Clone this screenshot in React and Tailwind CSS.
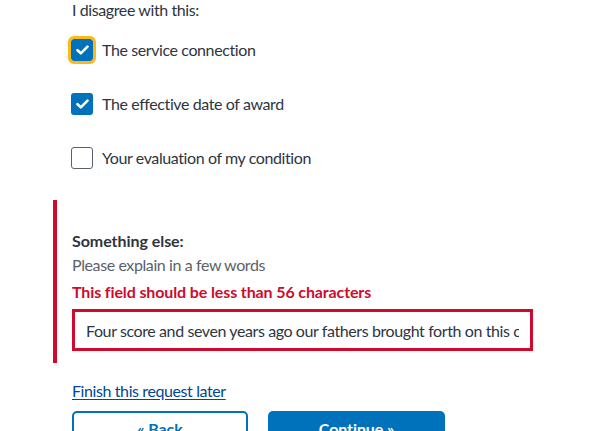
import { useState } from "react";

const options = [
  { id: "service", label: "The service connection", focused: true },
  { id: "date", label: "The effective date of award" },
  { id: "evaluation", label: "Your evaluation of my condition" },
];

function Checkbox({ checked, focused, onToggle }) {
  return (
    <button
      type="button"
      onClick={onToggle}
      className={
        "flex h-[22px] w-[22px] shrink-0 items-center justify-center rounded-[3px] " +
        (checked ? "bg-[#0071bb]" : "border-[1.5px] border-[#5b616b] bg-white") +
        (focused ? " outline-[3px] outline-offset-[0px] outline-solid outline-[#fdb81e]" : "")
      }
    >
      {checked && (
        <svg width="13" height="10" viewBox="0 0 13 10" fill="none">
          <path d="M1.5 5.2 4.8 8.3 11.5 1.6" stroke="white" strokeWidth="2.6" strokeLinecap="round" strokeLinejoin="round" />
        </svg>
      )}
    </button>
  );
}

export default function App() {
  const [checked, setChecked] = useState({ service: true, date: true, evaluation: false });
  const [text, setText] = useState(
    "Four score and seven years ago our fathers brought forth on this continent"
  );

  const toggle = (id) => setChecked((prev) => ({ ...prev, [id]: !prev[id] }));

  return (
    <div className="h-[431px] overflow-hidden bg-white pl-[72px] text-[16px] tracking-[-0.4px] text-[#2e353f] [font-family:Lato,'Liberation_Sans',sans-serif]">
      <div className="leading-[20px]">I disagree with this:</div>

      <div className="-ml-px mt-[19px] flex flex-col gap-[32px]">
        {options.map((opt) => (
          <label key={opt.id} className="flex h-[22px] items-center gap-[9px] leading-[20px]">
            <Checkbox checked={checked[opt.id]} focused={opt.focused} onToggle={() => toggle(opt.id)} />
            <span>{opt.label}</span>
          </label>
        ))}
      </div>

      <div className="-ml-[19px] mt-[31px] w-[480px] border-l-4 border-[#cf0a2c] pb-[12px] pl-[15px] pt-[31px]">
        <div className="font-bold leading-[20px] tracking-[-0.05px]">Something else:</div>
        <div className="mt-[4px] leading-[20px] text-[#5b616b]">Please explain in a few words</div>
        <div className="mt-[7px] font-bold leading-[20px] tracking-[-0.12px] text-[#cf0a2c]">
          This field should be less than 56 characters
        </div>
        <input
          value={text}
          onChange={(e) => setText(e.target.value)}
          className="mt-[7px] block h-[42px] w-[461px] border-[3px] border-[#cf0a2c] bg-white px-[11px] text-[16px] tracking-[-0.4px] text-[#2e353f] outline-none"
        />
      </div>

      <a href="#" className="mt-[18px] block w-fit leading-[20px] text-[#004795] underline underline-offset-2">
        Finish this request later
      </a>

      <div className="mt-[10px] flex gap-[20px]">
        <button className="h-[44px] w-[176px] rounded-[5px] border-2 border-[#0071bb] bg-white pb-[8px] font-bold tracking-[-0.1px] text-[#0071bb]">
          « Back
        </button>
        <button className="h-[44px] w-[177px] rounded-[5px] bg-[#0071bb] pb-[8px] font-bold tracking-[-0.1px] text-white">
          Continue »
        </button>
      </div>
    </div>
  );
}
